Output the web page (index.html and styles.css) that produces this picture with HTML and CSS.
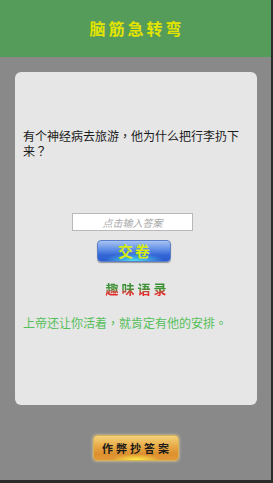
FILE: index.html
```html
<!DOCTYPE html>
<html>
<head>
<meta charset="UTF-8">
<title>脑筋急转弯</title>
<link rel="stylesheet" href="styles.css">
</head>
<body>
<div class="screen">
  <div class="header">脑筋急转弯</div>
  <div class="main">
    <div class="card">
      <p class="question">有个神经病去旅游，他为什么把行李扔下来？</p>
      <input class="answer" type="text" placeholder="点击输入答案">
      <button class="submit">交卷</button>
      <div class="fun">趣味语录</div>
      <p class="quote">上帝还让你活着，就肯定有他的安排。</p>
    </div>
    <button class="cheat">作弊抄答案</button>
  </div>
</div>
</body>
</html>
```

FILE: styles.css
```css
html {
    background-color: #2b2b2b;
}
body {
    margin: 0;
    font-family: "Noto Sans CJK SC", "DejaVu Sans", sans-serif;
}
.screen {
    width: 271px;
    height: 480px;
    background-color: #898989;
    display: flex;
    flex-direction: column;
}
.header {
    height: 57px;
    background-color: #559c5a;
    color: #e2e400;
    font-size: 16px;
    font-weight: bold;
    letter-spacing: 3px;
    text-align: center;
    line-height: 56px;
    padding-left: 3px;
}
.main {
    display: flex;
    flex-direction: column;
    align-items: center;
    padding-top: 15px;
}
.card {
    width: 226px;
    height: 277px;
    padding: 56px 8px 0 8px;
    margin-left: 1px;
    background-color: #e6e6e6;
    border-radius: 6px;
    display: flex;
    flex-direction: column;
    align-items: center;
}
.question {
    align-self: stretch;
    margin: 0;
    font-family: "Noto Sans CJK TC", sans-serif;
    font-size: 12px;
    line-height: 15px;
    color: #1a1a1a;
}
.answer {
    margin-top: 55px;
    margin-right: 7px;
    width: 117px;
    height: 14px;
    padding: 1px;
    border: 1px solid #b9b9b9;
    background: #fff;
    font-size: 10px;
    font-family: "Noto Sans CJK SC", sans-serif;
    text-align: center;
    outline: none;
}
.answer::placeholder {
    color: #a8a8a8;
    font-style: italic;
}
.submit {
    margin-top: 9px;
    margin-right: 4px;
    width: 74px;
    height: 22px;
    border: 1px solid #5a7fc8;
    border-radius: 4px;
    background: radial-gradient(ellipse 30px 8px at 50% 100%, #4fe0f0, rgba(79, 224, 240, 0)),
                linear-gradient(#a8c4f2, #5d8ce6 45%, #3566d6 70%, #2c5cd0);
    box-shadow: 0 1px 1px rgba(0, 0, 0, 0.35);
    color: #d4ec14;
    font-size: 15px;
    font-weight: bold;
    letter-spacing: 2px;
    line-height: 18px;
    padding: 0 0 0 2px;
    font-family: "Noto Sans CJK SC", sans-serif;
}
.fun {
    margin-top: 19px;
    font-size: 13px;
    font-weight: bold;
    letter-spacing: 3px;
    line-height: 16px;
    padding-left: 3px;
    background: linear-gradient(#2f8a2f, #3f9436 50%, #c04a36 66%, #e62828 85%);
    -webkit-background-clip: text;
    background-clip: text;
    color: transparent;
}
.quote {
    align-self: stretch;
    margin: 18px 0 0 0;
    font-family: "Noto Sans CJK TC", sans-serif;
    font-size: 12px;
    line-height: 16px;
    color: #55c05a;
}
.cheat {
    margin-top: 30px;
    width: 86px;
    height: 26px;
    border: 1px solid #d7b25a;
    border-radius: 4px;
    background: radial-gradient(ellipse 24px 6px at 50% 100%, #fff04a, rgba(255, 240, 74, 0)),
                linear-gradient(#f4d27a, #e7a844 45%, #dd8f2e 75%, #e39b36);
    box-shadow: 0 0 3px #f0dc9a;
    color: #1a1a1a;
    font-size: 11px;
    font-weight: bold;
    letter-spacing: 3px;
    padding: 0 0 0 3px;
    font-family: "Noto Sans CJK SC", sans-serif;
}
```
